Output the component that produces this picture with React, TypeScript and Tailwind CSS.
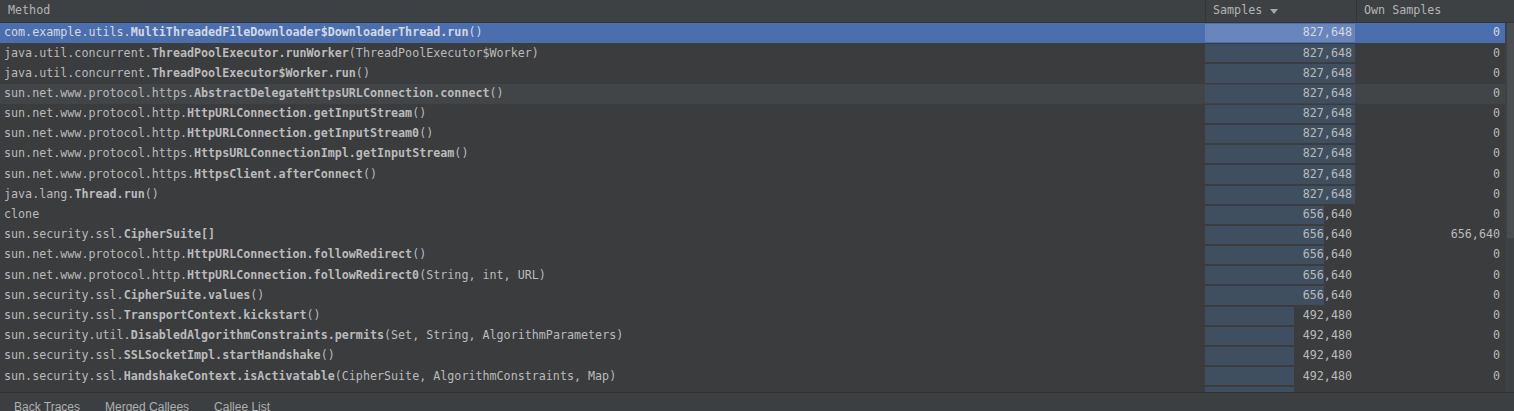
import React from "react";

type Row = {
  pkg: string;
  name: string;
  args: string;
  samples: number;
  own: number;
};

const rows: Row[] = [
  { pkg: "com.example.utils.", name: "MultiThreadedFileDownloader$DownloaderThread.run", args: "()", samples: 827648, own: 0 },
  { pkg: "java.util.concurrent.", name: "ThreadPoolExecutor.runWorker", args: "(ThreadPoolExecutor$Worker)", samples: 827648, own: 0 },
  { pkg: "java.util.concurrent.", name: "ThreadPoolExecutor$Worker.run", args: "()", samples: 827648, own: 0 },
  { pkg: "sun.net.www.protocol.https.", name: "AbstractDelegateHttpsURLConnection.connect", args: "()", samples: 827648, own: 0 },
  { pkg: "sun.net.www.protocol.http.", name: "HttpURLConnection.getInputStream", args: "()", samples: 827648, own: 0 },
  { pkg: "sun.net.www.protocol.http.", name: "HttpURLConnection.getInputStream0", args: "()", samples: 827648, own: 0 },
  { pkg: "sun.net.www.protocol.https.", name: "HttpsURLConnectionImpl.getInputStream", args: "()", samples: 827648, own: 0 },
  { pkg: "sun.net.www.protocol.https.", name: "HttpsClient.afterConnect", args: "()", samples: 827648, own: 0 },
  { pkg: "java.lang.", name: "Thread.run", args: "()", samples: 827648, own: 0 },
  { pkg: "clone", name: "", args: "", samples: 656640, own: 0 },
  { pkg: "sun.security.ssl.", name: "CipherSuite[]", args: "", samples: 656640, own: 656640 },
  { pkg: "sun.net.www.protocol.http.", name: "HttpURLConnection.followRedirect", args: "()", samples: 656640, own: 0 },
  { pkg: "sun.net.www.protocol.http.", name: "HttpURLConnection.followRedirect0", args: "(String, int, URL)", samples: 656640, own: 0 },
  { pkg: "sun.security.ssl.", name: "CipherSuite.values", args: "()", samples: 656640, own: 0 },
  { pkg: "sun.security.ssl.", name: "TransportContext.kickstart", args: "()", samples: 492480, own: 0 },
  { pkg: "sun.security.util.", name: "DisabledAlgorithmConstraints.permits", args: "(Set, String, AlgorithmParameters)", samples: 492480, own: 0 },
  { pkg: "sun.security.ssl.", name: "SSLSocketImpl.startHandshake", args: "()", samples: 492480, own: 0 },
  { pkg: "sun.security.ssl.", name: "HandshakeContext.isActivatable", args: "(CipherSuite, AlgorithmConstraints, Map)", samples: 492480, own: 0 },
  // next row is scrolled almost out of view, only its bar top shows
  { pkg: "", name: "", args: "", samples: 492480, own: -1 },
];

const MAX = 827648;
const fmt = (n: number) => n.toLocaleString("en-US");

const TableRow = ({ row, index }: { row: Row; index: number }) => {
  const selected = index === 0;
  const hovered = index === 3;
  const bg = selected ? "bg-[#4b6eaf]" : hovered ? "bg-[#424547]" : "";
  const barW = Math.round((row.samples / MAX) * 150);

  return (
    <div className={`flex h-[20.2px] shrink-0 items-center ${bg} ${selected ? "text-[#d4d9e2]" : "text-[#bbbbbb]"}`}>
      <div className="w-[1205px] shrink-0 overflow-hidden whitespace-nowrap pl-[4px]">
        {row.pkg}
        <span className="font-bold">{row.name}</span>
        {row.args}
      </div>
      <div className="relative flex h-full w-[151px] shrink-0 items-center justify-end pr-[4px]">
        <div
          className={`absolute left-0 top-[1px] bottom-[1px] ${selected ? "bg-[#6886bb]" : "bg-[#3f4f60]"}`}
          style={{ width: barW }}
        />
        {row.own >= 0 && <span className="relative">{fmt(row.samples)}</span>}
      </div>
      <div className="flex w-[149px] shrink-0 justify-end pr-[5px]">
        {row.own >= 0 ? fmt(row.own) : ""}
      </div>
    </div>
  );
};

export default function App() {
  return (
    <div
      className="flex h-[411px] w-[1514px] flex-col overflow-hidden bg-[#3a3c3e] text-[11.7px] text-[#bbbbbb]"
      style={{ fontFamily: '"DejaVu Sans Mono", monospace' }}
    >
      {/* header */}
      <div className="flex h-[23px] shrink-0 items-center border-b border-[#323436] bg-[#3e4143] text-[#b4b4b4]">
        <div className="w-[1205px] shrink-0 pl-[8px]">Method</div>
        <div className="flex h-full w-[151px] shrink-0 items-center gap-[8px] border-l border-[#333537] pl-[7px]">
          <span>Samples</span>
          <svg width="8" height="5" viewBox="0 0 8 5" className="mt-[1px]">
            <path d="M0 0 L8 0 L4 5 Z" fill="#a8a8a8" />
          </svg>
        </div>
        <div className="flex h-full flex-1 items-center border-l border-[#333537] pl-[7px]">Own Samples</div>
      </div>

      {/* body */}
      <div className="flex h-[369px] shrink-0 overflow-hidden">
        <div className="flex w-[1505px] shrink-0 flex-col overflow-hidden">
          {rows.map((row, i) => (
            <TableRow key={i} row={row} index={i} />
          ))}
        </div>
        <div className="flex flex-1 bg-[#3e4143] pl-[2px]">
          <div className="h-[215px] w-full bg-[#4b4e50]" />
        </div>
      </div>

      {/* bottom tabs */}
      <div
        className="flex flex-1 gap-[25px] border-t border-[#303234] bg-[#3c3f41] pl-[14px] pt-[7px] text-[12px] leading-[14px] text-[#b0b0b0]"
        style={{ fontFamily: '"Liberation Sans", Arial, sans-serif' }}
      >
        <span>Back Traces</span>
        <span>Merged Callees</span>
        <span>Callee List</span>
      </div>
    </div>
  );
}
